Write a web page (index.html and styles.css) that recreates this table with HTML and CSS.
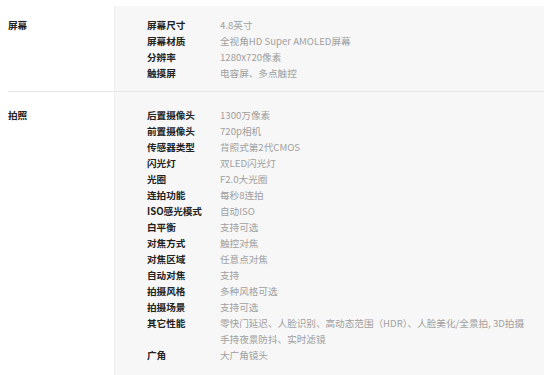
FILE: index.html
```html
<!DOCTYPE html>
<html lang="zh">
<head>
<meta charset="utf-8">
<link rel="stylesheet" href="styles.css">
</head>
<body>
<div class="spec">
  <section class="group g1">
    <div class="cat">屏幕</div>
    <dl class="items">
      <dt>屏幕尺寸</dt><dd>4.8英寸</dd>
      <dt>屏幕材质</dt><dd>全视角HD Super AMOLED屏幕</dd>
      <dt>分辨率</dt><dd>1280x720像素</dd>
      <dt>触摸屏</dt><dd>电容屏、多点触控</dd>
    </dl>
  </section>
  <section class="group g2">
    <div class="cat">拍照</div>
    <dl class="items">
      <dt>后置摄像头</dt><dd>1300万像素</dd>
      <dt>前置摄像头</dt><dd>720p相机</dd>
      <dt>传感器类型</dt><dd>背照式第2代CMOS</dd>
      <dt>闪光灯</dt><dd>双LED闪光灯</dd>
      <dt>光圈</dt><dd>F2.0大光圈</dd>
      <dt>连拍功能</dt><dd>每秒8连拍</dd>
      <dt>ISO感光模式</dt><dd>自动ISO</dd>
      <dt>白平衡</dt><dd>支持可选</dd>
      <dt>对焦方式</dt><dd>触控对焦</dd>
      <dt>对焦区域</dt><dd>任意点对焦</dd>
      <dt>自动对焦</dt><dd>支持</dd>
      <dt>拍摄风格</dt><dd>多种风格可选</dd>
      <dt>拍摄场景</dt><dd>支持可选</dd>
      <dt>其它性能</dt><dd>零快门延迟、人脸识别、高动态范围（HDR）、人脸美化/全景拍, 3D拍摄<br>手持夜景防抖、实时滤镜</dd>
      <dt>广角</dt><dd>大广角镜头</dd>
    </dl>
  </section>
</div>
</body>
</html>
```
FILE: styles.css
```css
html, body {
  margin: 0;
  padding: 0;
  background: #ffffff;
}
body {
  font-family: "Noto Sans CJK SC", "Open Sans", sans-serif;
  font-size: 9.6px;
  line-height: 16px;
  color: #333333;
  padding-top: 6px;
}
.spec {
  padding-left: 8px;
}
.group {
  display: flex;
  border-bottom: 1px solid #e6e6e6;
}
.group:last-child {
  border-bottom: none;
}
.cat {
  width: 106px;
  flex: none;
  font-weight: bold;
  color: #222222;
}
.g1 .cat { padding-top: 11px; }
.g2 .cat { padding-top: 15px; }
.items {
  flex: 1;
  margin: 0;
  background: #f7f7f7;
  border-left: 1px solid #efefef;
  padding-left: 32px;
  display: grid;
  grid-template-columns: 73px 1fr;
  align-content: start;
}
.g1 .items { padding-top: 11px; padding-bottom: 10px; }
.g2 .items { padding-top: 15px; padding-bottom: 12px; }
.items dt {
  font-weight: bold;
  color: #222222;
}
.items dd {
  margin: 0;
  color: #a0a0a0;
  white-space: nowrap;
}
```
